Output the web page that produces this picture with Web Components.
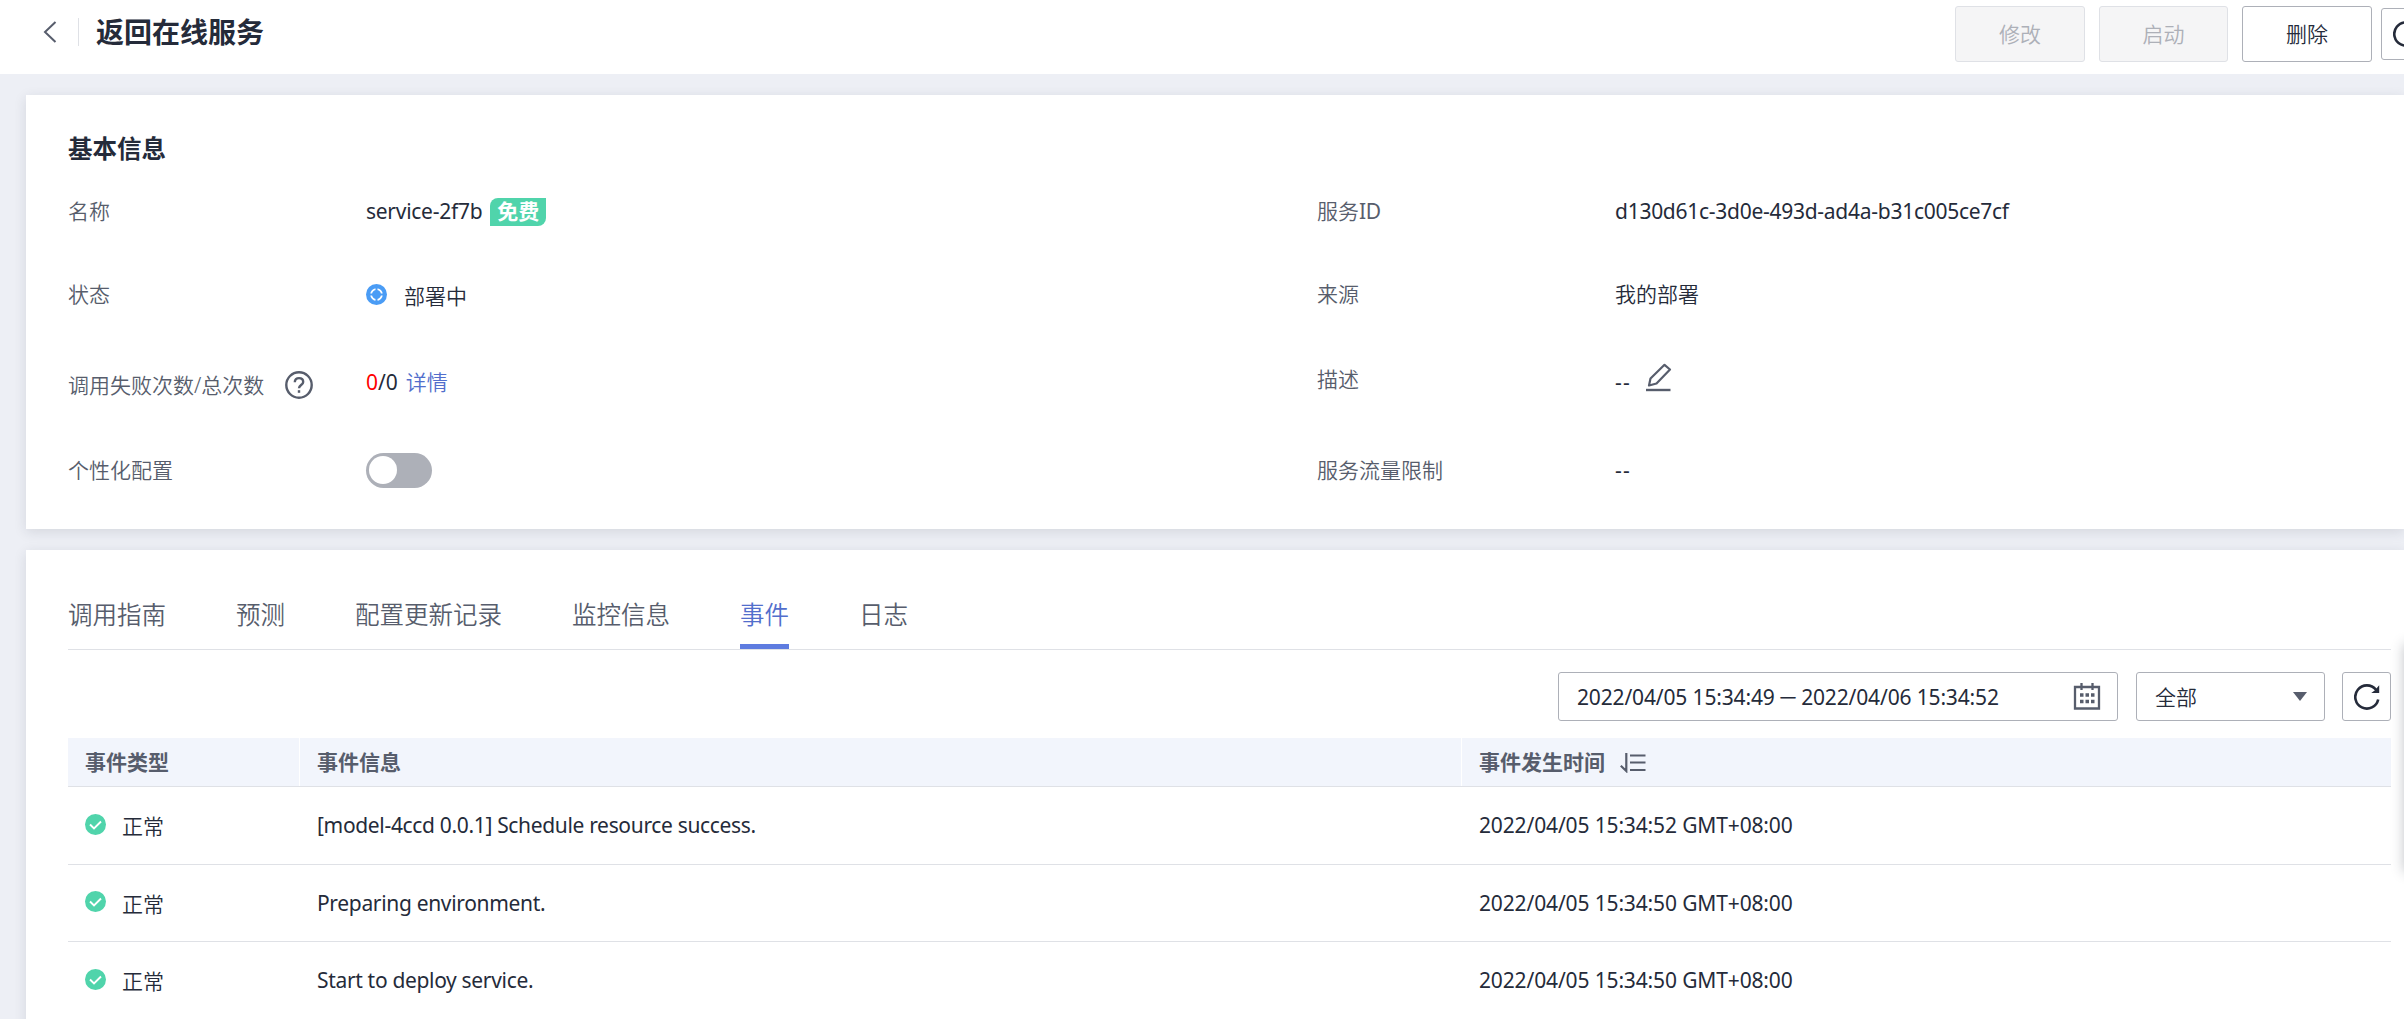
<!DOCTYPE html>
<html lang="zh-CN">
<head>
<meta charset="utf-8">
<title>在线服务</title>
<style>
  body {
    margin: 0;
    width: 2404px;
    height: 1019px;
    overflow: hidden;
    background: #edeff5;
    color: #252b3a;
    font: 350 21px/30px "Noto Sans", "Noto Sans CJK SC", sans-serif;
  }
</style>
</head>
<body>
<service-page></service-page>

<script>
const icons = {
  back: '<svg width="14" height="22" viewBox="0 0 14 22" fill="none" stroke="#575d6c" stroke-width="2"><path d="M12.5 1 2 11l10.500 10"/></svg>',
  deploying: '<svg width="21" height="21" viewBox="0 0 21 21"><circle cx="10.500" cy="10.500" r="10.500" fill="#4a9cf5"/><circle cx="10.500" cy="10.500" r="5.400" fill="none" stroke="#fff" stroke-width="1.800"/><path d="M10.500 3.500v4.700M10.500 12.800v4.700M3.500 10.500h4.700M12.800 10.500h4.700" stroke="#4a9cf5" stroke-width="2"/></svg>',
  help: '<svg width="28" height="28" viewBox="0 0 28 28" fill="none" stroke="#575d6c" stroke-width="2.400"><circle cx="14" cy="14" r="12.700"/><path d="M9.800 11.300c0-2.600 1.700-4.200 4.200-4.200s4.200 1.500 4.200 3.800c0 3-4.200 3.300-4.200 6.400"/><path d="M14 19.200v2.600"/></svg>',
  edit: '<svg width="26" height="29" viewBox="0 0 26 29" fill="none" stroke="#575d6c" stroke-width="2.200"><path d="M18.500 1.800 24 6.500 10.500 20.500 3 22.500 4.500 15.500Z" stroke-linejoin="round"/><path d="M0 27h24.500" stroke-width="2.400"/></svg>',
  calendar: '<svg width="28" height="27" viewBox="0 0 28 27" fill="none" stroke="#575d6c" stroke-width="2.300"><path d="M2 4h24v21.500H2z"/><path d="M8.500 0v7M19.500 0v7"/><path d="M7 12h14.500M7 18.500h14.500" stroke-width="3.400" stroke-dasharray="3.500 2"/></svg>',
  refresh: '<svg width="26" height="26" viewBox="0 0 26 26" fill="none" stroke="#252b3a" stroke-width="2.600"><path d="M24.200 15.500A11.600 11.600 0 1 1 22 5.800"/><path d="M25.200 1.200v7.800h-8l3.500-2.500z" fill="#252b3a" stroke="none"/></svg>',
  sort: '<svg width="26" height="20" viewBox="0 0 26 20" fill="none" stroke="#575d6c" stroke-width="2.200"><path d="M6.300 0v18L.8 12.800M10 2.500h15.500M10 9.500h15.500M10 17h15.500"/></svg>',
  ok: '<svg width="21" height="21" viewBox="0 0 21 21"><circle cx="10.500" cy="10.500" r="10.500" fill="#50d4ab"/><path d="m5 10.500 4 4 7-7" fill="none" stroke="#fff" stroke-width="1.900"/></svg>'
};

class SvgIcon extends HTMLElement {
  constructor() {
    super();
    this.attachShadow({ mode: 'open' });
  }

  connectedCallback() {
    this.shadowRoot.innerHTML = `
      <style>
        :host { display: block; flex: none; }
        svg { display: block; }
      </style>
      ${icons[this.getAttribute('name')]}
    `;
  }
}

// every other element just clones its own markup
function define(name, html) {
  const template = document.createElement('template');
  template.innerHTML = html;

  customElements.define(name, class extends HTMLElement {
    constructor() {
      super();
      this.attachShadow({ mode: 'open' }).appendChild(template.content.cloneNode(true));
    }
  });
}

customElements.define('svg-icon', SvgIcon);

define('action-button', `
  <style>
    :host {
      display: flex;
      align-items: center;
      justify-content: center;
      box-sizing: border-box;
      flex: none;
      width: 130px;
      height: 56px;
      border: 1px solid #adb0b8;
      border-radius: 3px;
      background: #fff;
    }
    :host([disabled]) { border-color: #dfe1e6; background: #f5f5f6; color: #adb0b8; }
    :host([square]) { width: 49px; height: 49px; }
  </style>
  <slot></slot>
`);

define('page-header', `
  <style>
    :host {
      display: flex;
      box-sizing: border-box;
      height: 74px;
      padding: 6px 0 0 43px;
      background: #fff;
    }
    .title { display: flex; align-items: center; height: 52px; }
    .line { width: 1px; height: 28px; margin: 0 17px 0 21px; background: #dfe1e6; }
    h1 { margin: 0; font-size: 28px; line-height: 40px; font-weight: 700; }
    .actions { display: flex; flex: none; gap: 14px; margin-left: auto; margin-right: -27px; }
    .narrow { width: 129px; }
    .last { width: 50px; height: 52px; margin: 2px 0 0 -5px; }
  </style>
  <div class="title">
    <svg-icon name="back"></svg-icon>
    <span class="line"></span>
    <h1>返回在线服务</h1>
  </div>
  <div class="actions">
    <action-button disabled>修改</action-button>
    <action-button class="narrow" disabled>启动</action-button>
    <action-button>删除</action-button>
    <action-button class="last"><svg-icon name="refresh"></svg-icon></action-button>
  </div>
`);

define('page-card', `
  <style>
    :host {
      display: block;
      box-sizing: border-box;
      margin-left: 26px;
      background: #fff;
      box-shadow: 0 3px 12px rgba(37, 43, 58, .12);
    }
  </style>
  <slot></slot>
`);

define('info-item', `
  <style>
    :host { display: flex; height: 30px; align-items: center; }
    .label { display: flex; align-items: center; gap: 21px; width: 298px; color: #575d6c; }
    .value { display: flex; align-items: center; }
  </style>
  <div class="label"><slot name="label"></slot></div>
  <div class="value"><slot></slot></div>
`);

define('free-tag', `
  <style>
    :host {
      display: block;
      margin: 2px 0 0 8px;
      padding: 0 7px;
      height: 28px;
      line-height: 26px;
      border-radius: 8px 0;
      background: #50d4ab;
      color: #fff;
      font-weight: 700;
    }
  </style>
  <slot></slot>
`);

define('toggle-switch', `
  <style>
    :host {
      display: block;
      box-sizing: border-box;
      width: 66px;
      height: 35px;
      padding: 3.5px 3px;
      border-radius: 18px;
      background: #adb0b8;
    }
    i { display: block; width: 28px; height: 28px; border-radius: 50%; background: #fff; }
  </style>
  <i></i>
`);

define('basic-info', `
  <style>
    :host { display: block; padding: 36px 0 0 42px; height: 398px; }
    h2 { margin: 0; font-size: 24.5px; line-height: 36px; font-weight: 700; }
    .grid {
      display: grid;
      grid-template-columns: 1249px 1fr;
      grid-template-rows: 83px 88px 88px 30px;
      padding-top: 29px;
    }
    .status { gap: 17px; display: flex; align-items: center; }
    .latin { font-weight: 400; letter-spacing: -.27px; }
    .count { letter-spacing: 0; }
    .empty { font-weight: 400; letter-spacing: 1.2px; }
    .fail { color: #f00; }
    .link { color: #526ecc; margin-left: 8px; }
    .low { padding-top: 3px; }
    .lower { padding-top: 5px; }
    .high { padding-bottom: 7px; }
    .edit { margin: -10px 0 0 15px; }
  </style>
  <h2>基本信息</h2>
  <div class="grid">
    <info-item><span slot="label">名称</span><span class="latin">service-2f7b</span><free-tag>免费</free-tag></info-item>
    <info-item><span slot="label">服务<span class="latin">ID</span></span><span class="latin">d130d61c-3d0e-493d-ad4a-b31c005ce7cf</span></info-item>
    <info-item><span slot="label">状态</span><span class="status"><svg-icon name="deploying"></svg-icon><span class="low">部署中</span></span></info-item>
    <info-item><span slot="label">来源</span>我的部署</info-item>
    <info-item><span slot="label" class="lower">调用失败次数/总次数</span><svg-icon slot="label" name="help" class="lower"></svg-icon><span class="latin count fail">0</span><span class="latin count">/0</span><span class="link">详情</span></info-item>
    <info-item><span slot="label" class="high">描述</span><span class="empty">--</span><svg-icon class="edit" name="edit"></svg-icon></info-item>
    <info-item><span slot="label">个性化配置</span><toggle-switch></toggle-switch></info-item>
    <info-item><span slot="label">服务流量限制</span><span class="empty">--</span></info-item>
  </div>
`);

define('tab-item', `
  <style>
    :host {
      display: block;
      box-sizing: border-box;
      height: 50px;
      font-size: 24.5px;
      line-height: 32px;
      color: #575d6c;
    }
    :host([active]) { color: #526ecc; border-bottom: 5px solid #5e7ce0; }
  </style>
  <slot></slot>
`);

define('tab-bar', `
  <style>
    :host { display: flex; gap: 70px; border-bottom: 1px solid #dfe1e6; }
  </style>
  <slot></slot>
`);

define('filter-bar', `
  <style>
    :host { display: flex; justify-content: flex-end; padding: 22px 0 17px; }
    .field {
      display: flex;
      align-items: center;
      justify-content: space-between;
      box-sizing: border-box;
      width: 560px;
      height: 49px;
      margin-right: 18px;
      padding: 0 16px 0 18px;
      border: 1px solid #adb0b8;
      border-radius: 3px;
      font-weight: 400;
      letter-spacing: -.15px;
    }
    .dash { margin: 0 -2.5px; }
    .select { width: 189px; margin-right: 17px; padding: 0 17px 0 18px; font-weight: 350; letter-spacing: 0; }
    .caret { border: 7.5px solid transparent; border-top: 9px solid #575d6c; border-bottom: 0; }
  </style>
  <div class="field"><span>2022/04/05 15:34:49 <span class="dash">－</span> 2022/04/06 15:34:52</span><svg-icon name="calendar"></svg-icon></div>
  <div class="field select">全部<span class="caret"></span></div>
  <action-button square><svg-icon name="refresh"></svg-icon></action-button>
`);

define('event-row', `
  <style>
    :host {
      display: grid;
      grid-template-columns: 231px 1162px 1fr;
      height: 76.6px;
      border-bottom: 1px solid #dfe1e6;
    }
    div { display: flex; align-items: center; padding-left: 17px; }
    div + div { padding-left: 18px; font-weight: 400; letter-spacing: -.33px; }
    div + .time { letter-spacing: -.14px; }
    :host([head]) {
      height: 48px;
      background: #f2f5fc;
      color: #575d6c;
    }
    :host([head]) div { font-weight: 700; letter-spacing: 0; }
    :host([head]) div + div { padding-left: 17px; border-left: 1px solid #fff; }
  </style>
  <div><slot name="type"></slot></div>
  <div><slot name="info"></slot></div>
  <div class="time"><slot name="time"></slot></div>
`);

define('event-state', `
  <style>
    :host { display: flex; align-items: center; gap: 16px; }
    svg-icon { padding-bottom: 2px; }
    span { padding-top: 2px; }
  </style>
  <svg-icon name="ok"></svg-icon><span><slot></slot></span>
`);

define('event-panel', `
  <style>
    :host { display: block; height: 500px; padding: 49px 13px 0 42px; }
    .sort { margin: 2px 0 0 15px; }
  </style>
  <tab-bar>
    <tab-item>调用指南</tab-item>
    <tab-item>预测</tab-item>
    <tab-item>配置更新记录</tab-item>
    <tab-item>监控信息</tab-item>
    <tab-item active>事件</tab-item>
    <tab-item>日志</tab-item>
  </tab-bar>
  <filter-bar></filter-bar>
  <event-row head>
    <span slot="type">事件类型</span>
    <span slot="info">事件信息</span>
    <span slot="time">事件发生时间</span>
    <svg-icon slot="time" class="sort" name="sort"></svg-icon>
  </event-row>
  <event-row>
    <event-state slot="type">正常</event-state>
    <span slot="info">[model-4ccd 0.0.1] Schedule resource success.</span>
    <span slot="time">2022/04/05 15:34:52 GMT+08:00</span>
  </event-row>
  <event-row>
    <event-state slot="type">正常</event-state>
    <span slot="info">Preparing environment.</span>
    <span slot="time">2022/04/05 15:34:50 GMT+08:00</span>
  </event-row>
  <event-row>
    <event-state slot="type">正常</event-state>
    <span slot="info">Start to deploy service.</span>
    <span slot="time">2022/04/05 15:34:50 GMT+08:00</span>
  </event-row>
`);

// floating side panel sits just past the right edge, only its shadow shows
define('side-dock', `
  <style>
    :host {
      position: absolute;
      left: 2404px;
      top: 644px;
      width: 40px;
      height: 228px;
      box-shadow: 0 0 12px rgba(37, 43, 58, .28);
    }
  </style>
`);

define('service-page', `
  <style>
    :host { display: block; position: relative; width: 2404px; height: 1019px; overflow: hidden; }
    page-card { margin-top: 21px; }
  </style>
  <page-header></page-header>
  <page-card><basic-info></basic-info></page-card>
  <page-card><event-panel></event-panel></page-card>
  <side-dock></side-dock>
`);
</script>
</body>
</html>
